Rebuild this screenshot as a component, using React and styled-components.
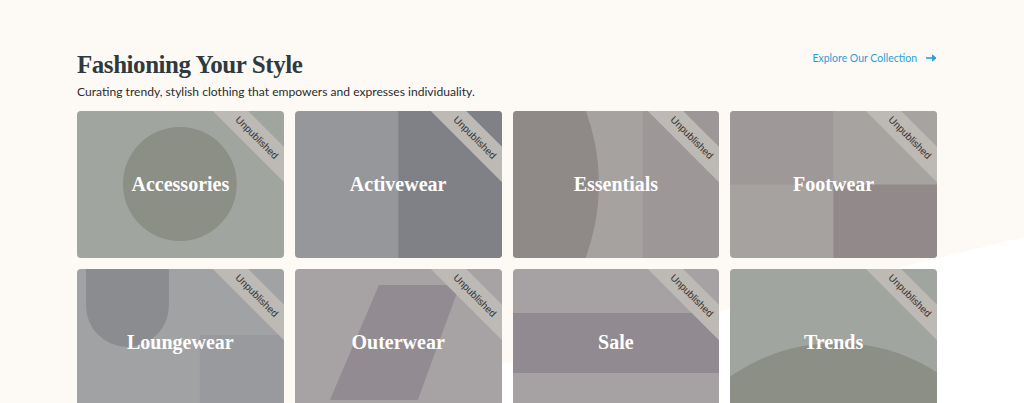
import React from 'react'
import styled, { createGlobalStyle } from 'styled-components'

const GlobalStyle = createGlobalStyle`
  html, body {
    margin: 0;
    padding: 0;
  }
  body {
    background: #ffffff;
    font-family: Lato, "Liberation Sans", sans-serif;
    color: #2b2b2b;
  }
`

// cream page with a white slab rising towards the right edge
const Page = styled.div`
  min-height: 1400px;
  padding: 50px 0 0 77px;
  box-sizing: border-box;
  background:
    linear-gradient(166.34deg, #fdfaf6 472px, #ffffff 472.5px) top left / 100% 600px no-repeat,
    #ffffff;
`

const Section = styled.section`
  width: 860px;
  display: flex;
  flex-direction: column;
  gap: 10px;
`

const Header = styled.header`
  display: flex;
  justify-content: space-between;
  align-items: flex-start;
`

const Heading = styled.div`
  display: flex;
  flex-direction: column;
  gap: 3px;
`

const Title = styled.h2`
  margin: 0;
  font-family: "Liberation Serif", serif;
  font-weight: 700;
  font-size: 25px;
  line-height: 30px;
  letter-spacing: -0.45px;
  color: #2f3a3f;
`

const Subtitle = styled.p`
  margin: 0;
  font-size: 12.1px;
  line-height: 18px;
  color: #2b2b2b;
`

const ExploreLink = styled.a`
  display: flex;
  align-items: center;
  gap: 9px;
  font-size: 10.5px;
  line-height: 16px;
  color: #2a9fd6;
  text-decoration: none;
  cursor: pointer;
`

const Grid = styled.div`
  display: grid;
  grid-template-columns: repeat(4, 1fr);
  gap: 11px;
`

const Card = styled.article`
  position: relative;
  height: 147px;
  border-radius: 4px;
  overflow: hidden;
  display: grid;
  grid-template-areas: 'stack';
  background: ${p => p.$bg};
`

const Art = styled.svg`
  grid-area: stack;
  width: 100%;
  height: 100%;
  display: block;
`

const CardTitle = styled.h3`
  grid-area: stack;
  place-self: center;
  margin: 0;
  color: #ffffff;
  font-family: "Liberation Serif", serif;
  font-weight: 700;
  font-size: 20px;
`

const Ribbon = styled.span`
  position: absolute;
  top: 14px;
  right: -28px;
  width: 110px;
  height: 25px;
  transform: rotate(45deg);
  background: #bdb9b4;
  color: #333333;
  font-family: "Liberation Sans", Arial, sans-serif;
  font-size: 10px;
  display: flex;
  align-items: center;
  justify-content: center;
`

const Arrow = () => (
  <svg width="11" height="8" viewBox="0 0 11 8" fill="none">
    <path d="M0 4H9" stroke="#2a9fd6" strokeWidth="1.6" />
    <path d="M6.5 1L10 4L6.5 7Z" fill="#2a9fd6" stroke="#2a9fd6" strokeWidth="1" strokeLinejoin="round" />
  </svg>
)

const categories = [
  {
    name: 'Accessories',
    bg: '#a1a59f',
    shapes: <circle cx="103" cy="73" r="57" fill="#8b8f86" />,
  },
  {
    name: 'Activewear',
    bg: '#96979a',
    shapes: <rect x="103.5" y="0" width="104" height="147" fill="#808186" />,
  },
  {
    name: 'Essentials',
    bg: '#a6a2a0',
    shapes: (
      <>
        <rect x="130" y="0" width="77" height="147" fill="#9d9897" />
        <circle cx="-125" cy="73" r="211" fill="#8f8a87" />
      </>
    ),
  },
  {
    name: 'Footwear',
    bg: '#a6a2a0',
    shapes: (
      <>
        <rect x="0" y="0" width="103.5" height="73.5" fill="#9e9898" />
        <rect x="103.5" y="0" width="104" height="73.5" fill="#a7a3a1" />
        <rect x="103.5" y="73.5" width="104" height="74" fill="#928a8a" />
      </>
    ),
  },
  {
    name: 'Loungewear',
    bg: '#a1a2a4',
    shapes: (
      <>
        <path d="M9 0H92V36.5A41.5 41.5 0 0 1 9 36.5Z" fill="#8a8c90" />
        <rect x="123" y="66" width="84" height="81" fill="#999a9d" />
      </>
    ),
  },
  {
    name: 'Outerwear',
    bg: '#a7a3a5',
    shapes: <polygon points="84,16 165,16 123,131 35,131" fill="#928b91" />,
  },
  {
    name: 'Sale',
    bg: '#a6a2a4',
    shapes: <rect x="0" y="44" width="207" height="60" fill="#918a91" />,
  },
  {
    name: 'Trends',
    bg: '#a1a59f',
    shapes: <circle cx="107" cy="261" r="187" fill="#8b8f86" />,
  },
]

export default function App() {
  return (
    <>
      <GlobalStyle />
      <Page>
        <Section>
          <Header>
            <Heading>
              <Title>Fashioning Your Style</Title>
              <Subtitle>Curating trendy, stylish clothing that empowers and expresses individuality.</Subtitle>
            </Heading>
            <ExploreLink>
              Explore Our Collection
              <Arrow />
            </ExploreLink>
          </Header>
          <Grid>
            {categories.map(c => (
              <Card key={c.name} $bg={c.bg}>
                <Art viewBox="0 0 207 147" preserveAspectRatio="none" aria-hidden="true">
                  {c.shapes}
                </Art>
                <CardTitle>{c.name}</CardTitle>
                <Ribbon>Unpublished</Ribbon>
              </Card>
            ))}
          </Grid>
        </Section>
      </Page>
    </>
  )
}
